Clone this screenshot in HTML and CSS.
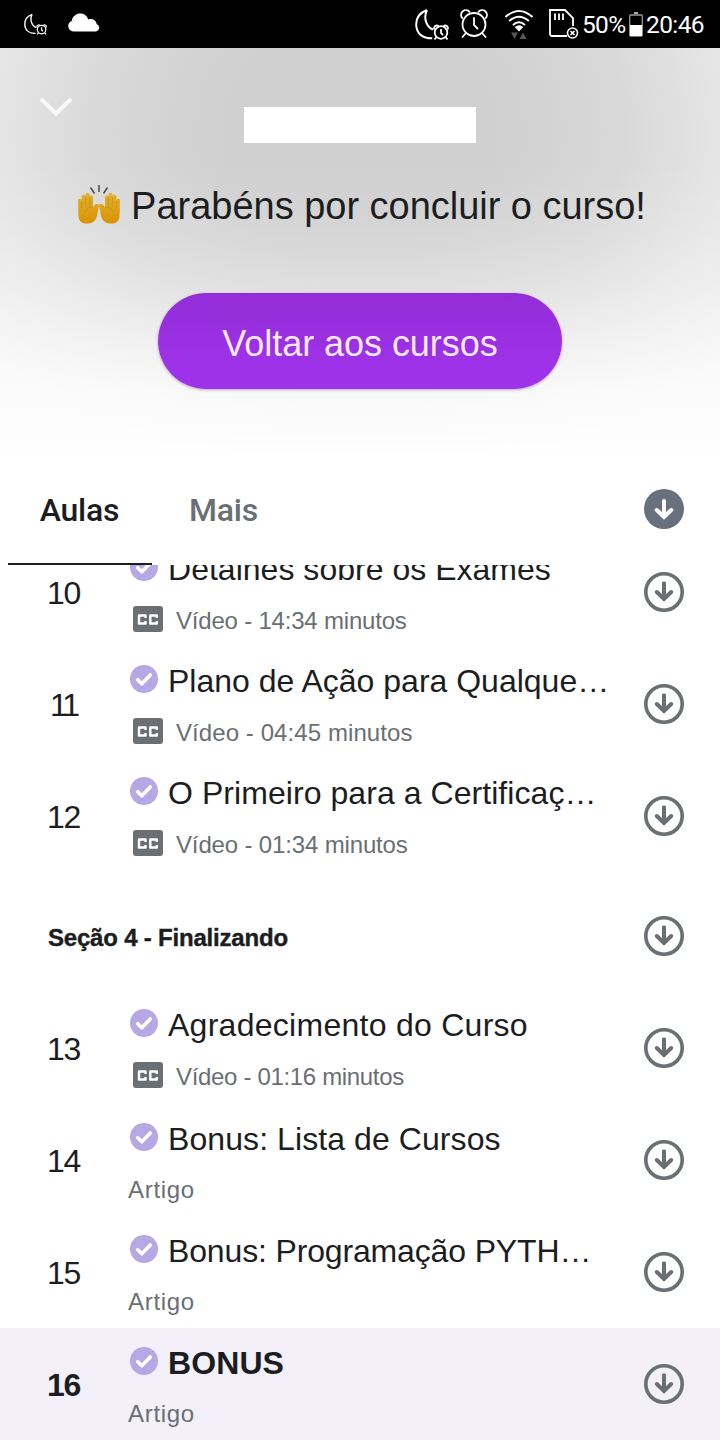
FILE: index.html
```
<!DOCTYPE html>
<html lang="pt-BR">
<head>
<meta charset="utf-8">
<title>Curso</title>
<link rel="stylesheet" href="styles.css">
</head>
<body>
<svg class="defs" width="0" height="0">
  <defs>
    <symbol id="alarm" viewBox="0 0 28 30">
      <g fill="none" stroke="#fff" stroke-width="1.800" stroke-linecap="round">
        <circle cx="14" cy="15.500" r="11.500"/><path d="M14 9v7l3.500 3.500M5.500 24.500 2.500 28M22.500 24.500l3 3.500M2.200 9A4.600 4.600 0 0 1 9.500 2.800M18.500 2.800A4.600 4.600 0 0 1 25.800 9"/>
      </g>
    </symbol>
    <symbol id="night" viewBox="0 0 34 32">
      <path d="M12 1C4 4 1 10 1.200 16c.3 9 7 13.500 16 13.200M12 1c-4 8-.5 17 6 19.500" fill="none" stroke="#fff" stroke-width="2"/>
      <g fill="none" stroke="#fff" stroke-width="1.800"><circle cx="26" cy="23.500" r="6.300"/><path d="M26 20v4l2 2M21.500 28l-2 2.500M30.500 28l2 2.500M19.500 20.500c-1.500-3 2-5 4-3.200M32.500 20.500c1.500-3-2-5-4-3.200"/></g>
    </symbol>
    <symbol id="check" viewBox="0 0 28 28">
      <circle cx="14" cy="14" r="14" fill="#b5a8e4"/><path d="M7.700 14.700l4.100 4 8.500-8.700" fill="none" stroke="#fff" stroke-width="3.700" stroke-linecap="round" stroke-linejoin="round"/>
    </symbol>
    <symbol id="cc" viewBox="0 0 30 26">
      <rect width="30" height="26" rx="3" fill="#6a6f73"/><path d="M12.500 11.900V9.500H6v8h6.500v-2.400M23.800 11.900V9.500h-6.500v8h6.500v-2.400" fill="none" stroke="#fff" stroke-width="2.400" stroke-linejoin="round"/>
    </symbol>
    <symbol id="down" viewBox="0 0 40 40">
      <circle cx="20" cy="20" r="18.200" fill="none" stroke="#6a6f73" stroke-width="3.600"/><path d="M20 11.200v15M12.800 20l7.200 7 7.200-7" fill="none" stroke="#6a6f73" stroke-width="4" stroke-linecap="round"/>
    </symbol>
    <symbol id="down-solid" viewBox="0 0 40 40">
      <circle cx="20" cy="20" r="20" fill="#686f7d"/><path d="M20 12v15M12.800 21l7.200 7 7.200-7" fill="none" stroke="#fff" stroke-width="4" stroke-linecap="round"/>
    </symbol>
  </defs>
</svg>
<div class="screen">
  <div class="status">
    <svg class="s-night" width="23" height="23"><use href="#night"/></svg>
    <svg class="s-cloud" width="32" height="19" viewBox="0 0 32 19"><path d="M6 18.500A5.500 5.500 0 0 1 4.500 8C5 3 9 .5 12.500.5c4 0 6.500 2.500 7.500 6 4-1.500 7.500 1 8 4.500a4 4 0 0 1-.5 7.500z" transform="translate(-1 0) scale(1.060 1)" fill="#fff"/></svg>
    <div class="status-right">
      <svg class="s-moon" width="34" height="32"><use href="#night"/></svg>
      <svg class="s-alarm" width="28" height="30"><use href="#alarm"/></svg>
      <svg class="s-wifi" width="28" height="30" viewBox="0 0 28 30"><g fill="none" stroke="#fff" stroke-width="2"><path d="M.5 8Q14-4 27.500 8M4.200 12Q14 3.500 23.800 12M8 16Q14 10.500 20 16"/></g><path d="M9.700 18Q14 14.500 18.300 18L14 22.500z" fill="#fff"/><path d="M6 23.500h7L9.500 30zM14.500 30h7L18 23.500z" fill="#555"/></svg>
      <svg class="s-card" width="30" height="31" viewBox="0 0 30 31"><path d="M18 27H3a2 2 0 0 1-2-2V1h15l8 8v8M6 4.500V11M10 4.500V11M14 4.500V11" fill="none" stroke="#fff" stroke-width="1.800"/><circle cx="23.500" cy="24" r="5" fill="#000" stroke="#fff" stroke-width="1.600"/><path d="M21.500 22l4 4M25.500 22l-4 4" stroke="#fff" stroke-width="1.700"/></svg>
      <span class="pct">50%</span>
      <svg class="s-bat" width="14" height="25" viewBox="0 0 14 25"><path d="M5 1h4" stroke="#aaa" stroke-width="2"/><rect x=".7" y="3" width="12.600" height="21" rx="1" fill="none" stroke="#999" stroke-width="1.300"/><path d="M1 13h12v11H1z" fill="#fff"/></svg>
      <span class="clock">20:46</span>
    </div>
  </div>

  <header class="hero">
    <svg class="chevron" width="34" height="22" viewBox="0 0 34 22"><path d="M3 4l14 13.500L31 4" fill="none" stroke="#f8f9fa" stroke-width="4" stroke-linecap="round"/></svg>
    <div class="blank"></div>
    <h1 class="congrats">
      <svg class="hands" width="44" height="42" viewBox="0 0 44 42">
        <defs><linearGradient id="skin" x1="0" y1="0" x2="0" y2="1"><stop offset="0" stop-color="#e2b133"/><stop offset="1" stop-color="#d99300"/></linearGradient>
        <g id="hand"><path d="M1 17c0-3 3.500-3 3.500 0v-4c0-3 4-3 4 0v-2c0-3 4-3 4 0v2c0-2.500 3.500-2.500 3.500 0v11c1-3 2-4 4-4 2.500 0 2 2 1.500 4l-1.500 8c-1 4-3.500 7-9 7.500-6 .5-9-2-9.500-7z" fill="url(#skin)"/><path d="M4.600 17v7M8.600 13v10.500M12.600 13v10.500M16 23c-4 0-7 2-7.500 5" fill="none" stroke="#c08c16" stroke-width=".7"/></g></defs>
        <use href="#hand"/><use href="#hand" transform="translate(44 0) scale(-1 1)"/>
        <path d="M22 1v7M13.500 3.500l4 6M30.500 3.500l-4 6" stroke="#45464a" stroke-width="1.400"/>
      </svg>
      <span>Parabéns por concluir o curso!</span>
    </h1>
    <button class="back">Voltar aos cursos</button>
  </header>

  <nav class="tabs">
    <div class="tab active">Aulas</div>
    <div class="tab more">Mais</div>
    <svg class="dl" width="40" height="40"><use href="#down-solid"/></svg>
  </nav>

  <main class="list">
    <div class="row first">
      <div class="num">10</div>
      <div class="body"><div class="title t10"><svg width="28" height="28"><use href="#check"/></svg>Detalhes sobre os Exames</div><div class="meta m10"><svg width="30" height="26"><use href="#cc"/></svg>Vídeo - 14:34 minutos</div></div>
      <svg class="dl" width="40" height="40"><use href="#down"/></svg>
    </div>
    <div class="row">
      <div class="num n11">11</div>
      <div class="body"><div class="title t11"><svg width="28" height="28"><use href="#check"/></svg>Plano de Ação para Qualque…</div><div class="meta m11"><svg width="30" height="26"><use href="#cc"/></svg>Vídeo - 04:45 minutos</div></div>
      <svg class="dl" width="40" height="40"><use href="#down"/></svg>
    </div>
    <div class="row">
      <div class="num">12</div>
      <div class="body"><div class="title t12"><svg width="28" height="28"><use href="#check"/></svg>O Primeiro para a Certificaç…</div><div class="meta m12"><svg width="30" height="26"><use href="#cc"/></svg>Vídeo - 01:34 minutos</div></div>
      <svg class="dl" width="40" height="40"><use href="#down"/></svg>
    </div>
    <div class="section"><h2>Seção 4 - Finalizando</h2><svg class="dl" width="40" height="40"><use href="#down"/></svg></div>
    <div class="row">
      <div class="num">13</div>
      <div class="body"><div class="title t13"><svg width="28" height="28"><use href="#check"/></svg>Agradecimento do Curso</div><div class="meta m13"><svg width="30" height="26"><use href="#cc"/></svg>Vídeo - 01:16 minutos</div></div>
      <svg class="dl" width="40" height="40"><use href="#down"/></svg>
    </div>
    <div class="row article">
      <div class="num">14</div>
      <div class="body"><div class="title t14"><svg width="28" height="28"><use href="#check"/></svg>Bonus: Lista de Cursos</div><div class="meta">Artigo</div></div>
      <svg class="dl" width="40" height="40"><use href="#down"/></svg>
    </div>
    <div class="row article">
      <div class="num">15</div>
      <div class="body"><div class="title t15"><svg width="28" height="28"><use href="#check"/></svg>Bonus: Programação PYTH…</div><div class="meta">Artigo</div></div>
      <svg class="dl" width="40" height="40"><use href="#down"/></svg>
    </div>
    <div class="row article current">
      <div class="num">16</div>
      <div class="body"><div class="title t16"><svg width="28" height="28"><use href="#check"/></svg>BONUS</div><div class="meta">Artigo</div></div>
      <svg class="dl" width="40" height="40"><use href="#down"/></svg>
    </div>
  </main>
</div>
</body>
</html>
```
FILE: styles.css
```
* { box-sizing: border-box; }
body { margin: 0; background: #fff; font-family: "Liberation Sans", Arial, sans-serif; color: #1c1d1f; }
.defs { display: block; height: 0; }
svg { flex: none; }
.screen { width: 720px; height: 1440px; overflow: hidden; display: flex; flex-direction: column; }

.status { height: 48px; flex: none; background: #000; color: #fff; display: flex; align-items: flex-start; font-family: Roboto, sans-serif; font-size: 24.5px; line-height: 50px; }
.s-night { margin: 13px 0 0 24px; }
.s-cloud { margin: 13px 0 0 21px; }
.status-right { flex: 1; display: flex; align-items: flex-start; padding-left: 315px; }
.s-moon { margin-top: 9px; }
.s-alarm { margin: 9px 0 0 11px; }
.s-wifi { margin: 9px 0 0 17px; }
.s-card { margin: 9px 0 0 16px; }
.pct { width: 44px; margin-left: 3px; letter-spacing: -.7px; white-space: nowrap; }
.s-bat { margin: 12px 0 0 3px; }
.clock { margin-left: 3px; letter-spacing: -.6px; }

.hero {
  height: 408px; flex: none; display: flex; flex-direction: column; align-items: center;
  background:
    linear-gradient(rgba(255,255,255,0) 112px, rgba(255,255,255,.04) 140px, rgba(255,255,255,.14) 190px, rgba(255,255,255,.3) 240px, rgba(255,255,255,.56) 295px, rgba(255,255,255,.8) 345px, rgba(255,255,255,.92) 390px, #fff 408px),
    radial-gradient(ellipse 430px 400px at 360px 85px, #cfcfcf 0, #d0d0d0 32%, #d8d8d8 60%, #e5e5e5 84%, #ececec 100%);
}
.chevron { align-self: flex-start; margin: 48px 0 0 39px; }
.blank { width: 232px; height: 36px; margin-top: -11px; background: #fff; }
.congrats { margin: 39px 0 0; height: 48px; padding-left: 3px; display: flex; align-items: center; gap: 10px; font-size: 38px; font-weight: 400; letter-spacing: -.02px; line-height: 48px; white-space: nowrap; }
.hands { margin-top: -2px; }
.back { width: 404px; height: 96px; margin-top: 63px; padding: 5px 0 0; border: 0; border-radius: 48px; background: linear-gradient(#942dd8, #9e32e9 80%); box-shadow: 0 1px 3px rgba(60,20,90,.35); color: #f8e9fd; font: 36px "Liberation Sans", Arial, sans-serif; letter-spacing: -.05px; }

.tabs { height: 109px; flex: none; display: flex; padding-left: 8px; font: 500 32px/108px Roboto, sans-serif; letter-spacing: -.2px; }
.tab { width: 143px; margin-right: 1px; text-align: center; height: 109px; }
.active { width: 144px; padding-right: 1px; margin-right: 0; border-bottom: 2px solid #1c1d1f; }
.more { color: #6a6f73; }
.tabs .dl { margin: 33px 36px 0 auto; }

.list { flex: 1; overflow: hidden; }
.row { height: 112px; display: flex; align-items: center; }
.first { margin-top: -29px; }
.num { width: 128px; text-align: center; font-size: 32px; line-height: 36px; padding: 2px 1px 0 0; letter-spacing: -1.4px; }
.n11 { letter-spacing: -3px; }
.body { flex: 1; height: 112px; padding-top: 14px; }
.title { height: 38px; display: flex; gap: 10px; padding-left: 2px; font-size: 32px; line-height: 38px; white-space: nowrap; }
.title svg { margin-top: 3px; }
.meta { height: 28px; margin-top: 19px; display: flex; gap: 13px; padding-left: 5px; font-size: 24px; line-height: 28px; color: #6a6f73; white-space: nowrap; }
.meta svg { margin-top: -1px; }
.article .body { padding-top: 16px; }
.article .meta { margin-top: 18px; padding-left: 0; letter-spacing: .7px; }
.dl { margin-right: 36px; }
.section { height: 120px; padding: 8px 0 0 48px; display: flex; align-items: center; justify-content: space-between; }
.section h2 { margin: 4px 0 0; font-size: 24px; line-height: 28px; letter-spacing: -.2px; -webkit-text-stroke: .4px #1c1d1f; }
.current { background: #f3f0fa; }
.current .num, .current .title { font-weight: 700; }

.t10 { letter-spacing: .02px; }
.t14 { letter-spacing: .08px; }
.t15 { letter-spacing: -.15px; }
.t12 { letter-spacing: .06px; }
.t13 { letter-spacing: .27px; }
.t16 { letter-spacing: .1px; }
.m10 { letter-spacing: -.2px; }
.m11 { letter-spacing: .08px; }
.m12 { letter-spacing: -.15px; }
.m13 { letter-spacing: -.33px; }
```
